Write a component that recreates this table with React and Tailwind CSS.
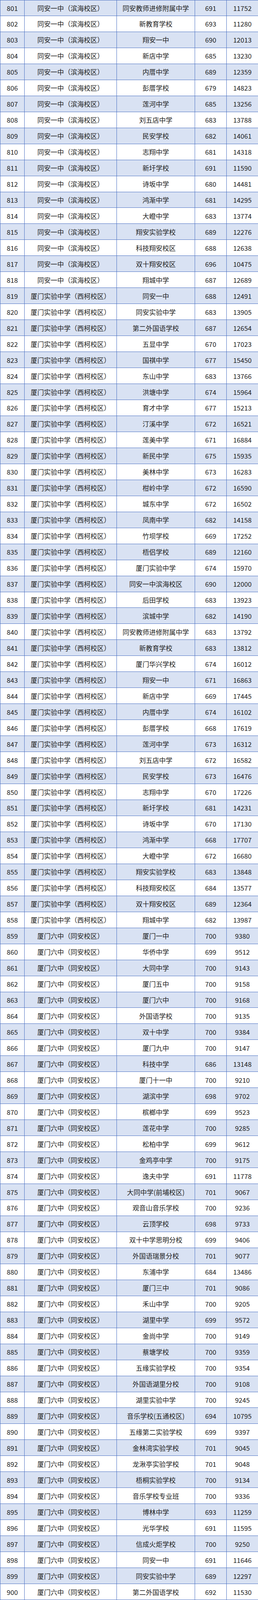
const A = '同安一中（滨海校区）';
const B = '厦门实验中学（西柯校区）';
const C = '厦门六中（同安校区）';

const rows = [
  [A, '同安教师进修附属中学', 691, 11752],
  [A, '新教育学校', 693, 11280],
  [A, '翔安一中', 690, 12013],
  [A, '新店中学', 685, 13230],
  [A, '内厝中学', 689, 12359],
  [A, '彭厝学校', 679, 14823],
  [A, '莲河中学', 685, 13256],
  [A, '刘五店中学', 683, 13788],
  [A, '民安学校', 682, 14061],
  [A, '志翔中学', 681, 14318],
  [A, '新圩学校', 691, 11590],
  [A, '诗坂中学', 680, 14481],
  [A, '鸿渐中学', 681, 14295],
  [A, '大嶝中学', 683, 13774],
  [A, '翔安实验学校', 689, 12276],
  [A, '科技翔安校区', 688, 12638],
  [A, '双十翔安校区', 696, 10475],
  [A, '翔城中学', 687, 12689],
  [B, '同安一中', 688, 12491],
  [B, '同安实验中学', 683, 13905],
  [B, '第二外国语学校', 687, 12654],
  [B, '五显中学', 670, 17023],
  [B, '国祺中学', 677, 15450],
  [B, '东山中学', 683, 13766],
  [B, '洪塘中学', 674, 15964],
  [B, '育才中学', 677, 15213],
  [B, '汀溪中学', 672, 16521],
  [B, '莲美中学', 671, 16884],
  [B, '新民中学', 675, 15935],
  [B, '美林中学', 673, 16283],
  [B, '柑岭中学', 672, 16590],
  [B, '城东中学', 672, 16502],
  [B, '凤南中学', 682, 14158],
  [B, '竹坝学校', 669, 17252],
  [B, '梧侣学校', 689, 12160],
  [B, '厦门实验中学', 674, 15970],
  [B, '同安一中滨海校区', 690, 12000],
  [B, '后田学校', 683, 13923],
  [B, '滨城中学', 682, 14190],
  [B, '同安教师进修附属中学', 683, 13792],
  [B, '新教育学校', 683, 13812],
  [B, '厦门华兴学校', 674, 16012],
  [B, '翔安一中', 671, 16863],
  [B, '新店中学', 669, 17445],
  [B, '内厝中学', 674, 16102],
  [B, '彭厝学校', 668, 17619],
  [B, '莲河中学', 673, 16312],
  [B, '刘五店中学', 672, 16582],
  [B, '民安学校', 673, 16476],
  [B, '志翔中学', 670, 17226],
  [B, '新圩学校', 681, 14231],
  [B, '诗坂中学', 670, 17130],
  [B, '鸿渐中学', 668, 17707],
  [B, '大嶝中学', 672, 16680],
  [B, '翔安实验学校', 683, 13848],
  [B, '科技翔安校区', 684, 13577],
  [B, '双十翔安校区', 689, 12364],
  [B, '翔城中学', 682, 13987],
  [C, '厦门一中', 700, 9380],
  [C, '华侨中学', 699, 9512],
  [C, '大同中学', 700, 9143],
  [C, '厦门五中', 700, 9158],
  [C, '厦门六中', 700, 9168],
  [C, '外国语学校', 700, 9135],
  [C, '双十中学', 700, 9384],
  [C, '厦门九中', 700, 9147],
  [C, '科技中学', 686, 13148],
  [C, '厦门十一中', 700, 9210],
  [C, '湖滨中学', 698, 9702],
  [C, '槟榔中学', 699, 9523],
  [C, '莲花中学', 700, 9285],
  [C, '松柏中学', 699, 9612],
  [C, '金鸡亭中学', 700, 9175],
  [C, '逸夫中学', 691, 11778],
  [C, '大同中学(前埔校区)', 701, 9067],
  [C, '观音山音乐学校', 700, 9236],
  [C, '云顶学校', 698, 9733],
  [C, '双十中学思明分校', 699, 9406],
  [C, '外国语瑞景分校', 701, 9077],
  [C, '东浦中学', 684, 13486],
  [C, '厦门三中', 701, 9086],
  [C, '禾山中学', 700, 9205],
  [C, '湖里中学', 699, 9572],
  [C, '金尚中学', 700, 9149],
  [C, '蔡塘学校', 700, 9359],
  [C, '五缘实验学校', 700, 9354],
  [C, '外国语湖里分校', 700, 9108],
  [C, '湖里实验中学', 700, 9245],
  [C, '音乐学校(五通校区)', 694, 10795],
  [C, '五缘第二实验学校', 699, 9397],
  [C, '金林湾实验学校', 701, 9045],
  [C, '龙湫亭实验学校', 701, 9048],
  [C, '梧桐实验学校', 700, 9134],
  [C, '音乐学校专业班', 700, 9336],
  [C, '博林中学', 693, 11259],
  [C, '光华学校', 691, 11595],
  [C, '信成火炬学校', 700, 9250],
  [C, '同安一中', 691, 11646],
  [C, '同安实验中学', 689, 12297],
  [C, '第二外国语学校', 692, 11530],
];

const Cell = ({ children, last }) => (
  <div
    className={`flex items-center justify-center overflow-hidden whitespace-nowrap leading-none ${
      last ? '' : 'border-r border-[#4a70c2]'
    }`}
  >
    {children}
  </div>
);

// the rows share the window height, so all 100 always fit in the frame
export default function App() {
  return (
    <div
      className="grid grid-rows-[repeat(100,minmax(0,1fr))] w-[660px] h-screen overflow-hidden bg-white text-[17px] text-[#1c1c1c] border-l border-[#4a70c2]"
      style={{ fontFamily: '"Noto Sans CJK SC", "Noto Sans", sans-serif' }}
    >
      {rows.map(([from, to, score, rank], i) => (
        <div
          key={i}
          className={`grid grid-cols-[62px_236px_200px_81px_80px] min-h-0 border-b border-r border-[#4a70c2] ${
            i === 0 ? 'border-t' : ''
          } ${i % 2 === 0 ? 'bg-[#d9e2f3]' : 'bg-white'}`}
        >
          <Cell>{801 + i}</Cell>
          <Cell>{from}</Cell>
          <Cell>{to}</Cell>
          <Cell>{score}</Cell>
          <Cell last>{rank}</Cell>
        </div>
      ))}
    </div>
  );
}
